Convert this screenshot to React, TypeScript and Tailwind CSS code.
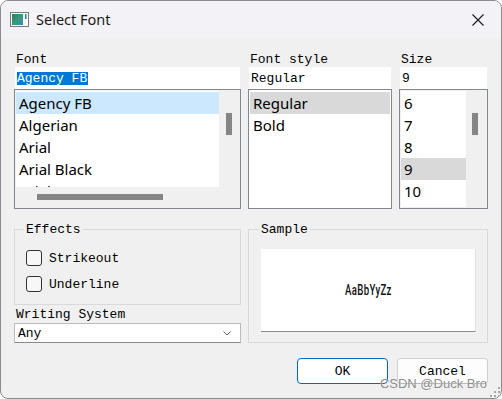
import React from "react";

const mono = "font-['Liberation_Mono',monospace] text-[13px] leading-[15px] text-black";
const ui = "font-['Noto_Sans',sans-serif] text-[15px] leading-[22px] text-black";

const fonts = ["Agency FB", "Algerian", "Arial", "Arial Black", "Arial Narrow"];
const styles = ["Regular", "Bold"];
const sizes = ["6", "7", "8", "9", "10", "11"];

const Row = ({ label, bg }: { label: string; bg?: string }) => (
  <div className={`h-[22px] pl-[3px] whitespace-nowrap ${ui} ${bg ?? ""}`}>{label}</div>
);

const Field = ({ children }: { children: React.ReactNode }) => (
  <div className={`h-[22px] mx-px bg-white flex items-center pl-[2px] pt-px ${mono}`}>{children}</div>
);

const Label = ({ text }: { text: string }) => (
  <div className={`h-[15px] pl-[2px] ${mono}`}>{text}</div>
);

const Thumb = ({ w, h }: { w: number; h: number }) => (
  <div className="bg-[#858585]" style={{ width: w, height: h }} />
);

const Checkbox = ({ label }: { label: string }) => (
  <div className="flex items-center gap-[7px] h-[16px]">
    <div className="w-[16px] h-[16px] rounded-[3px] border border-[#333] bg-[#f7f7f7]" />
    <span className={`${mono} pt-px`}>{label}</span>
  </div>
);

export default function App() {
  return (
    <div className="w-[502px] h-[399px] relative flex flex-col bg-[#f0f0f0] border border-[#8c8c8c] rounded-[8px] overflow-hidden">
      {/* title bar */}
      <div className="h-[37px] shrink-0 flex items-center bg-[#f3f2f7]">
        <svg width="19" height="15" viewBox="0 0 19 15" className="ml-[9px]">
          <defs>
            <linearGradient id="ico" x1="0" y1="0" x2="1" y2="1">
              <stop offset="0" stopColor="#2f7d5a" />
              <stop offset="0.5" stopColor="#3a9a7a" />
              <stop offset="1" stopColor="#3c86c6" />
            </linearGradient>
          </defs>
          <rect x="0.5" y="0.5" width="18" height="14" fill="#fbfbfb" stroke="#7a7a7a" />
          <rect x="2" y="2" width="11" height="11" fill="url(#ico)" />
          <rect x="15" y="2" width="1.5" height="5" fill="#2d7fa6" />
        </svg>
        <span className="ml-[7px] font-['Noto_Sans',sans-serif] text-[14.5px] text-[#1a1a1a]">Select Font</span>
        <div className="ml-auto w-[46px] h-full flex items-center justify-center">
          <svg width="12" height="12" viewBox="0 0 12 12">
            <path d="M0.5 0.5 L11.5 11.5 M11.5 0.5 L0.5 11.5" stroke="#1a1a1a" strokeWidth="1.1" />
          </svg>
        </div>
      </div>

      <div className="flex flex-col px-[13px] pt-[14px]">
        {/* top: font / style / size */}
        <div className="flex gap-[7px]">
          <div className="w-[227px] flex flex-col">
            <Label text="Font" />
            <Field>
              <span className="bg-[#0078d7] text-white leading-[13px] pr-px">Agency FB</span>
            </Field>
            <div className="h-[120px] border border-[#828790] p-px grid grid-cols-[203px_1fr] grid-rows-[96px_1fr]">
              <div className="bg-white pt-px overflow-hidden">
                {fonts.map((f, i) => (
                  <Row key={f} label={f} bg={i === 0 ? "bg-[#cce8ff]" : ""} />
                ))}
              </div>
              <div className="pl-[7px] pt-[22px]">
                <Thumb w={6} h={22} />
              </div>
              <div className="pl-[21px] pt-[7px]">
                <Thumb w={126} h={6} />
              </div>
              <div />
            </div>
          </div>

          <div className="w-[144px] flex flex-col">
            <Label text="Font style" />
            <Field>Regular</Field>
            <div className="h-[120px] border border-[#828790] p-px bg-white">
              <div className="pt-px">
                {styles.map((s, i) => (
                  <Row key={s} label={s} bg={i === 0 ? "bg-[#d9d9d9]" : ""} />
                ))}
              </div>
            </div>
          </div>

          <div className="w-[89px] flex flex-col">
            <Label text="Size" />
            <Field>9</Field>
            <div className="h-[120px] border border-[#828790] p-px flex">
              <div className="w-[65px] bg-white pt-px overflow-hidden">
                {sizes.map((s) => (
                  <Row key={s} label={s} bg={s === "9" ? "bg-[#d9d9d9]" : ""} />
                ))}
              </div>
              <div className="flex-1 pl-[6px] pt-[22px]">
                <Thumb w={6} h={22} />
              </div>
            </div>
          </div>
        </div>

        {/* bottom: effects / sample */}
        <div className="flex gap-[7px] mt-[13px]">
          <div className="w-[227px] flex flex-col">
            <fieldset className="h-[83px] border border-[#d9d9d9] pl-[11px] pt-[13px]">
              <legend className={`-ml-[2px] px-[2px] ${mono}`}>Effects</legend>
              <div className="flex flex-col gap-[10px]">
                <Checkbox label="Strikeout" />
                <Checkbox label="Underline" />
              </div>
            </fieldset>
            <div className="mt-[2px]">
              <Label text="Writing System" />
            </div>
            <div className="mt-px h-[20px] bg-white border border-[#bcbcbc] border-b-[#8a8a8a] flex items-center pl-[3px] pr-[9px]">
              <span className={mono}>Any</span>
              <svg width="8" height="5" viewBox="0 0 8 5" className="ml-auto">
                <path d="M0.5 0.5 L4 4 L7.5 0.5" fill="none" stroke="#606060" strokeWidth="1" />
              </svg>
            </div>
          </div>

          <fieldset className="w-[240px] h-[121px] border border-[#d9d9d9] pl-[12px] pt-[12px]">
            <legend className={`-ml-[2px] px-[2px] ${mono}`}>Sample</legend>
            <div className="w-[215px] h-[83px] bg-white border-r border-b border-r-[#e2e2e2] border-b-[#8a8a8a] flex items-center justify-center">
              <span className="inline-block font-['Roboto',sans-serif] font-medium text-[15px] text-[#111] scale-x-[0.64] tracking-[0.5px]">
                AaBbYyZz
              </span>
            </div>
          </fieldset>
        </div>

        {/* buttons */}
        <div className="flex justify-end gap-[9px] mt-[15px]">
          <button className={`w-[91px] h-[26px] rounded-[4px] bg-white border border-[#0067c0] ${mono}`}>OK</button>
          <button className={`w-[91px] h-[26px] rounded-[4px] bg-[#fdfdfd] border border-[#d0d0d0] border-b-[#b5b5b5] ${mono}`}>
            Cancel
          </button>
        </div>
      </div>

      {/* watermark overlay */}
      <div className="absolute right-[14px] bottom-[7px] font-['Liberation_Sans',sans-serif] text-[13px] leading-[15px] text-[rgba(110,110,110,0.8)] [text-shadow:0_0_1px_#fff]">
        CSDN @Duck Bro
      </div>
      {/* resize grip */}
      <svg width="10" height="10" viewBox="0 0 10 10" className="absolute right-[1px] bottom-[1px]">
        <g fill="#a8a8a8">
          <rect x="8" y="0" width="2" height="2" />
          <rect x="4" y="4" width="2" height="2" />
          <rect x="8" y="4" width="2" height="2" />
          <rect x="0" y="8" width="2" height="2" />
          <rect x="4" y="8" width="2" height="2" />
          <rect x="8" y="8" width="2" height="2" />
        </g>
      </svg>
    </div>
  );
}
